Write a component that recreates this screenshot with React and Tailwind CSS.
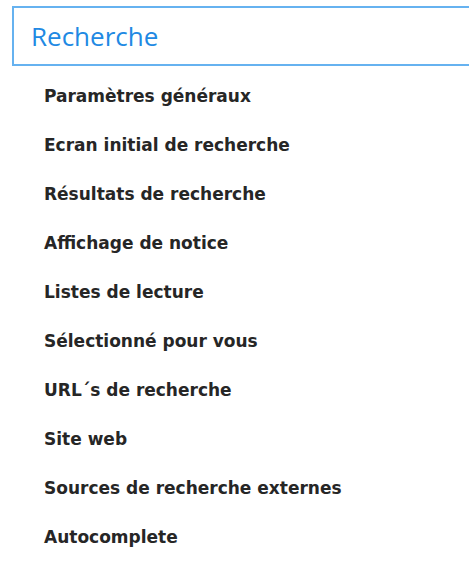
export default function App() {
  const items = [
    "Paramètres généraux",
    "Ecran initial de recherche",
    "Résultats de recherche",
    "Affichage de notice",
    "Listes de lecture",
    "Sélectionné pour vous",
    "URL´s de recherche",
    "Site web",
    "Sources de recherche externes",
    "Autocomplete",
  ];
  return (
    <div className="w-[469px] h-[571px] bg-white overflow-hidden">
      <div className="pt-[6px] pl-[12px]">
        <div className="h-[60px] w-[480px] border-2 border-[#66b2f0] flex items-center pl-[17px]">
          <span className="text-[26px] text-[#2189e3] font-['Open_Sans',sans-serif] leading-none">
            Recherche
          </span>
        </div>
      </div>
      <div className="flex flex-col pl-[44px] pt-[6px]">
        {items.map((t) => (
          <div
            key={t}
            className="h-[49px] flex items-center text-[17px] font-bold text-[#262626] font-['DejaVu_Sans',sans-serif]"
          >
            {t}
          </div>
        ))}
      </div>
    </div>
  );
}
